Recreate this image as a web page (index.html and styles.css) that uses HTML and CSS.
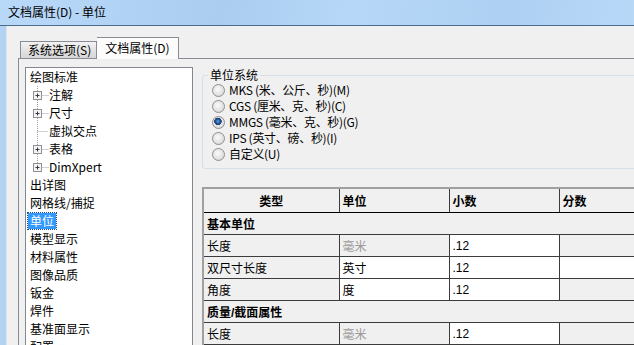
FILE: index.html
```html
<!DOCTYPE html>
<html lang="zh-CN">

<head>
    <meta charset="UTF-8">
    <meta name="viewport" content="width=device-width, initial-scale=1.0">
    <title>文档属性(D) - 单位</title>
    <link rel="stylesheet" href="styles.css">
</head>

<body>
    <header class="titlebar">文档属性(D) - 单位</header>
    <div class="frame">
        <div class="frameEdge"></div>
        <div class="client">
            <div class="tabs">
                <div class="tab">系统选项(S)</div>
                <div class="tab active">文档属性(D)</div>
            </div>
            <div class="tabPage">
                <ul class="tree">
                    <li class="node">绘图标准</li>
                    <li class="node child">
                        <svg class="branch" width="16" height="18" viewBox="0 0 16 18">
                            <path class="dots" d="M4.5 0V18M4.5 9.5H16" />
                            <rect x="0.5" y="5.5" width="8" height="8" />
                            <path class="plus" d="M2.5 9.5H6.5M4.5 7.5V11.5" />
                        </svg>注解</li>
                    <li class="node child">
                        <svg class="branch" width="16" height="18" viewBox="0 0 16 18">
                            <path class="dots" d="M4.5 0V18M4.5 9.5H16" />
                            <rect x="0.5" y="5.5" width="8" height="8" />
                            <path class="plus" d="M2.5 9.5H6.5M4.5 7.5V11.5" />
                        </svg>尺寸</li>
                    <li class="node child">
                        <svg class="branch" width="16" height="18" viewBox="0 0 16 18">
                            <path class="dots" d="M4.5 0V18M4.5 9.5H15" />
                        </svg>虚拟交点</li>
                    <li class="node child">
                        <svg class="branch" width="16" height="18" viewBox="0 0 16 18">
                            <path class="dots" d="M4.5 0V18M4.5 9.5H16" />
                            <rect x="0.5" y="5.5" width="8" height="8" />
                            <path class="plus" d="M2.5 9.5H6.5M4.5 7.5V11.5" />
                        </svg>表格</li>
                    <li class="node child">
                        <svg class="branch" width="16" height="18" viewBox="0 0 16 18">
                            <path class="dots" d="M4.5 0V9.5M4.5 9.5H16" />
                            <rect x="0.5" y="5.5" width="8" height="8" />
                            <path class="plus" d="M2.5 9.5H6.5M4.5 7.5V11.5" />
                        </svg>DimXpert</li>
                    <li class="node">出详图</li>
                    <li class="node">网格线/捕捉</li>
                    <li class="node"><span class="selected">单位</span></li>
                    <li class="node">模型显示</li>
                    <li class="node">材料属性</li>
                    <li class="node">图像品质</li>
                    <li class="node">钣金</li>
                    <li class="node">焊件</li>
                    <li class="node">基准面显示</li>
                    <li class="node">配置</li>
                </ul>
                <div class="settings">
                    <fieldset class="unitSystem">
                        <legend>单位系统</legend>
                        <div class="option"><span class="radio"></span>MKS (米、公斤、秒)(M)</div>
                        <div class="option"><span class="radio"></span>CGS (厘米、克、秒)(C)</div>
                        <div class="option"><span class="radio on"></span>MMGS (毫米、克、秒)(G)</div>
                        <div class="option"><span class="radio"></span>IPS (英寸、磅、秒)(I)</div>
                        <div class="option"><span class="radio"></span>自定义(U)</div>
                    </fieldset>
                    <table class="units">
                        <colgroup>
                            <col class="colType">
                            <col class="colUnit">
                            <col class="colDec">
                            <col class="colFrac">
                        </colgroup>
                        <thead>
                            <tr>
                                <th class="center">类型</th>
                                <th>单位</th>
                                <th>小数</th>
                                <th>分数</th>
                            </tr>
                        </thead>
                        <tbody>
                            <tr class="group">
                                <td colspan="4">基本单位</td>
                            </tr>
                            <tr>
                                <td class="label">长度</td>
                                <td class="off">毫米</td>
                                <td class="edit">.12</td>
                                <td class="off"></td>
                            </tr>
                            <tr>
                                <td class="label">双尺寸长度</td>
                                <td class="edit">英寸</td>
                                <td class="edit">.12</td>
                                <td class="edit"></td>
                            </tr>
                            <tr>
                                <td class="label">角度</td>
                                <td class="edit">度</td>
                                <td class="edit">.12</td>
                                <td class="off"></td>
                            </tr>
                            <tr class="group">
                                <td colspan="4">质量/截面属性</td>
                            </tr>
                            <tr>
                                <td class="label">长度</td>
                                <td class="off">毫米</td>
                                <td class="edit">.12</td>
                                <td class="off"></td>
                            </tr>
                        </tbody>
                    </table>
                </div>
            </div>
        </div>
    </div>
</body>

</html>
```

FILE: styles.css
```css
html,
body {
    margin: 0;
    padding: 0;
}

body {
    width: 634px;
    height: 345px;
    overflow: hidden;
    background-color: #f0f0f0;
    font-family: "Noto Sans CJK SC", "Liberation Sans", sans-serif;
    font-size: 12px;
    color: #000;
    display: flex;
    flex-direction: column;
}

.titlebar {
    height: 25px;
    line-height: 24px;
    padding-left: 8px;
    border-bottom: 1px solid #4b6c8e;
    background: linear-gradient(100deg, #b9d9f9 0%, #aacdf0 35%, #b6d7f7 55%, #aed0f2 80%, #b8d8f8 100%);
    flex-shrink: 0;
}

.frame {
    flex: 1;
    display: flex;
    min-height: 0;
}

.frameEdge {
    width: 6px;
    background-color: #b4d3f2;
    border-right: 1px solid #dce6ef;
    flex-shrink: 0;
}

.client {
    flex: 1;
    padding: 11px 0 0 11px;
    display: flex;
    flex-direction: column;
    min-width: 0;
}

/* tab strip */
.tabs {
    display: flex;
    align-items: flex-end;
    margin-left: 2px;
    height: 22px;
    margin-bottom: -1px;
    position: relative;
    z-index: 1;
}

.tab {
    box-sizing: border-box;
    height: 17px;
    line-height: 16px;
    margin-bottom: 1px;
    padding: 0 5px 0 7px;
    border: 1px solid #898c95;
    border-bottom: none;
    background: linear-gradient(#f3f3f3, #e3e3e3 50%, #d6d6d6);
}

.tab.active {
    height: 22px;
    line-height: 20px;
    margin-bottom: 0;
    padding: 0 8px 0 8px;
    border-left: none;
    background: #fcfcfc;
}

.tabPage {
    flex: 1;
    display: flex;
    border-top: 1px solid #898c95;
    border-left: 1px solid #898c95;
    padding: 8px 0 0 6px;
    min-height: 0;
}

/* tree */
.tree {
    list-style: none;
    margin: 0;
    padding: 0;
    width: 166px;
    flex-shrink: 0;
    background-color: #fff;
    border: 1px solid #828790;
    border-bottom: none;
    overflow: hidden;
}

.node {
    height: 18px;
    line-height: 18px;
    padding-left: 4px;
    display: flex;
    align-items: center;
    white-space: nowrap;
}

.node.child {
    padding-left: 7px;
}

.branch {
    flex-shrink: 0;
}

.branch .dots {
    fill: none;
    stroke: #a0a0a0;
    stroke-width: 1;
    stroke-dasharray: 1 1;
}

.branch rect {
    fill: #f4f4f4;
    stroke: #919191;
}

.branch .plus {
    fill: none;
    stroke: #2c3a4a;
}

.selected {
    background-color: #3399ff;
    color: #fff;
    padding: 0 2px;
    margin-left: -2px;
    line-height: 16px;
    outline: 1px dotted #1d4f86;
}

/* right side */
.settings {
    flex: 1;
    margin: 1px 0 0 9px;
    min-width: 0;
}

.unitSystem {
    margin: 0 -40px 0 0;
    padding: 0 0 6px 9px;
    border: 1px solid #d5dfe5;
    border-radius: 3px;
}

.unitSystem legend {
    padding: 0 2px;
    margin-left: -4px;
    line-height: 14px;
    color: #000;
}

.option {
    height: 16px;
    line-height: 16px;
    display: flex;
    align-items: center;
    white-space: nowrap;
    letter-spacing: -0.3px;
}

.radio {
    box-sizing: border-box;
    width: 13px;
    height: 13px;
    border: 1px solid #8e8f8f;
    border-radius: 50%;
    margin-right: 4px;
    background: radial-gradient(circle at 45% 40%, #fbfbfb 0, #e8e8e8 45%, #cfcfcf 100%);
}

.radio.on {
    background: radial-gradient(circle at 45% 40%, #6fa6e0 0, #245a9c 2px, #1a3f73 3.5px, transparent 4px),
        radial-gradient(circle at 45% 40%, #fbfbfb 0, #e8e8e8 45%, #cfcfcf 100%);
}

/* units grid */
.units {
    margin-top: 18px;
    border-collapse: collapse;
    table-layout: fixed;
    width: 466px;
    border-top: 2px solid #a0a0a0;
    border-left: 2px solid #a0a0a0;
    font-family: "Liberation Sans", "Noto Sans CJK SC", sans-serif;
    font-size: 12px;
}

.colType {
    width: 136px;
}

.colUnit,
.colDec,
.colFrac {
    width: 110px;
}

.units th,
.units td {
    border: 1px solid #3c3c3c;
    padding: 0 3px;
    height: 21px;
    text-align: left;
    vertical-align: middle;
    white-space: nowrap;
    overflow: hidden;
}

.units th {
    height: 23px;
    font-weight: bold;
    background-color: #f0f0f0;
    border-top: none;
    border-bottom-color: #000;
}

.units th.center {
    text-align: center;
}

.units .group td {
    font-weight: bold;
    background-color: #f0f0f0;
}

.units .label {
    background-color: #f0f0f0;
}

.units .off {
    background-color: #f0f0f0;
    color: #9a9a9a;
}

.units .edit {
    background-color: #fff;
}
```
